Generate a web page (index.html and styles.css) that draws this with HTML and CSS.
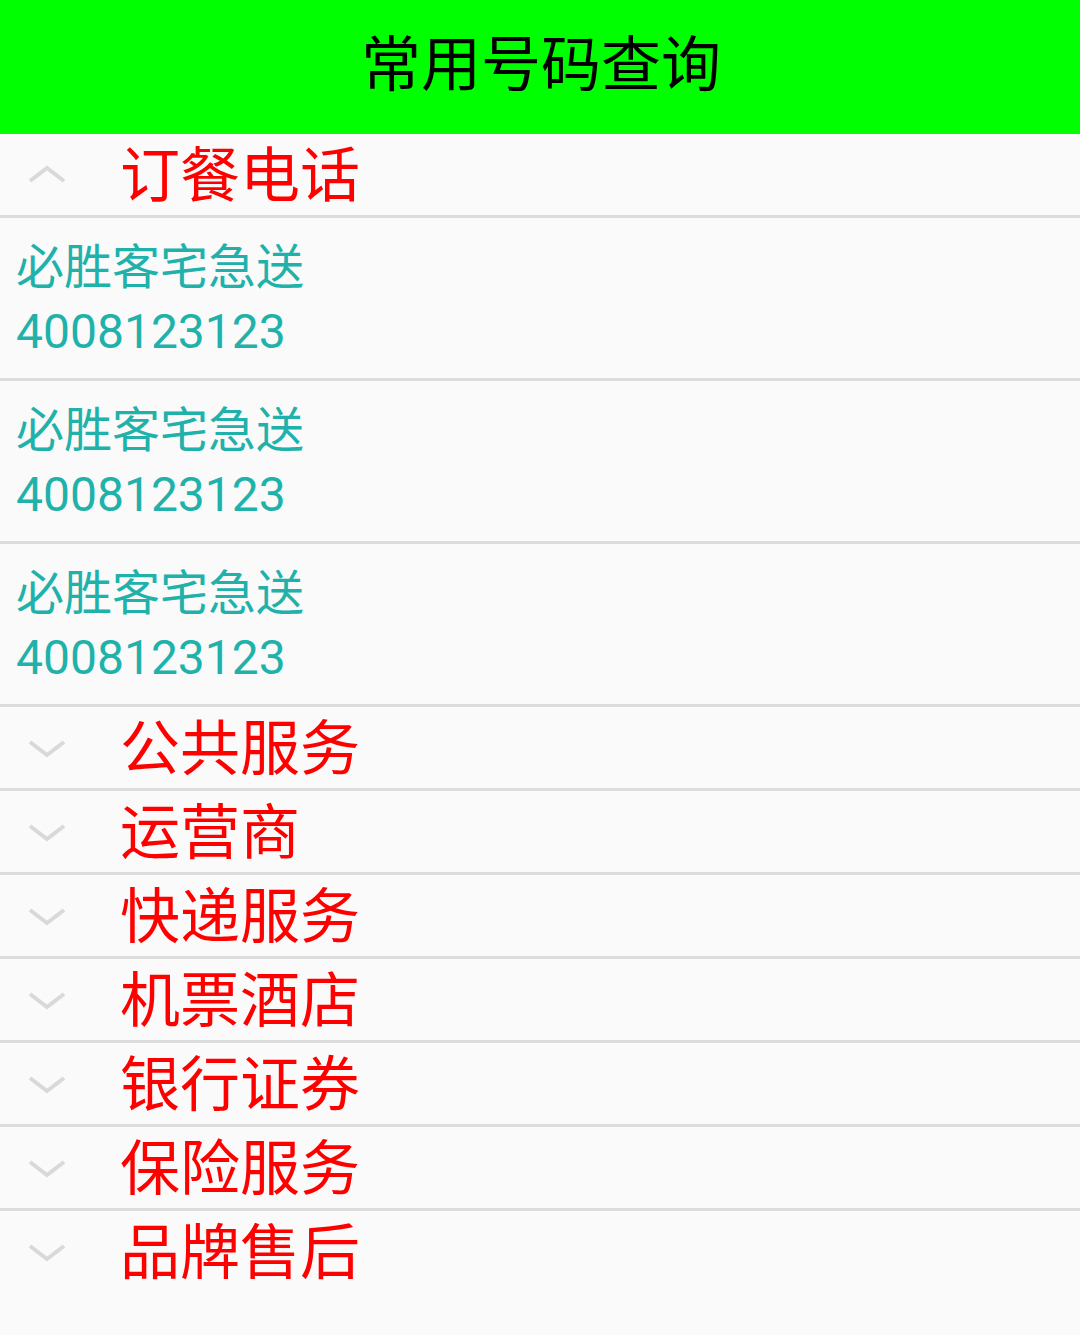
FILE: index.html
```html
<!DOCTYPE html>
<html lang="zh">
<head>
<meta charset="utf-8">
<title>常用号码查询</title>
<link rel="stylesheet" href="styles.css">
</head>
<body>
<header class="topbar">常用号码查询</header>
<main class="list">
  <div class="group open">
    <div class="group-head">
      <svg class="chev" viewBox="0 0 40 20" width="40" height="20"><polyline points="3,16 20,3 37,16"/></svg>
      <span class="group-title">订餐电话</span>
    </div>
    <div class="item"><div class="name">必胜客宅急送</div><div class="phone">4008123123</div></div>
    <div class="item"><div class="name">必胜客宅急送</div><div class="phone">4008123123</div></div>
    <div class="item"><div class="name">必胜客宅急送</div><div class="phone">4008123123</div></div>
  </div>
  <div class="group">
    <div class="group-head">
      <svg class="chev" viewBox="0 0 40 20" width="40" height="20"><polyline points="3,4 20,17 37,4"/></svg>
      <span class="group-title">公共服务</span>
    </div>
  </div>
  <div class="group">
    <div class="group-head">
      <svg class="chev" viewBox="0 0 40 20" width="40" height="20"><polyline points="3,4 20,17 37,4"/></svg>
      <span class="group-title">运营商</span>
    </div>
  </div>
  <div class="group">
    <div class="group-head">
      <svg class="chev" viewBox="0 0 40 20" width="40" height="20"><polyline points="3,4 20,17 37,4"/></svg>
      <span class="group-title">快递服务</span>
    </div>
  </div>
  <div class="group">
    <div class="group-head">
      <svg class="chev" viewBox="0 0 40 20" width="40" height="20"><polyline points="3,4 20,17 37,4"/></svg>
      <span class="group-title">机票酒店</span>
    </div>
  </div>
  <div class="group">
    <div class="group-head">
      <svg class="chev" viewBox="0 0 40 20" width="40" height="20"><polyline points="3,4 20,17 37,4"/></svg>
      <span class="group-title">银行证券</span>
    </div>
  </div>
  <div class="group">
    <div class="group-head">
      <svg class="chev" viewBox="0 0 40 20" width="40" height="20"><polyline points="3,4 20,17 37,4"/></svg>
      <span class="group-title">保险服务</span>
    </div>
  </div>
  <div class="group last">
    <div class="group-head">
      <svg class="chev" viewBox="0 0 40 20" width="40" height="20"><polyline points="3,4 20,17 37,4"/></svg>
      <span class="group-title">品牌售后</span>
    </div>
  </div>
</main>
</body>
</html>
```
FILE: styles.css
```css
html, body {
  margin: 0;
  padding: 0;
}
body {
  background: #fafafa;
  font-family: Roboto, "Noto Sans CJK SC", sans-serif;
  width: 1080px;
  height: 1335px;
  overflow: hidden;
}
.topbar {
  height: 134px;
  background: #00ff00;
  color: #000;
  font-size: 60px;
  display: flex;
  align-items: center;
  justify-content: center;
  padding: 0 0 16px 2px;
  box-sizing: border-box;
}
.list {
  display: flex;
  flex-direction: column;
}
.group-head {
  height: 81px;
  display: flex;
  align-items: center;
  border-bottom: 3px solid #dcdcdc;
}
.group.last .group-head {
  border-bottom: none;
}
.chev {
  margin-left: 27px;
  flex: none;
  fill: none;
  stroke: #d9d9d9;
  stroke-width: 4;
}
.group-title {
  margin-left: 53px;
  padding-top: 5px;
  color: #ff0000;
  font-size: 60px;
  line-height: 1;
}
.item {
  height: 142px;
  border-bottom: 3px solid #dcdcdc;
  padding: 18px 0 0 16px;
  color: #20b2aa;
  font-size: 48px;
  line-height: 64px;
}
```
